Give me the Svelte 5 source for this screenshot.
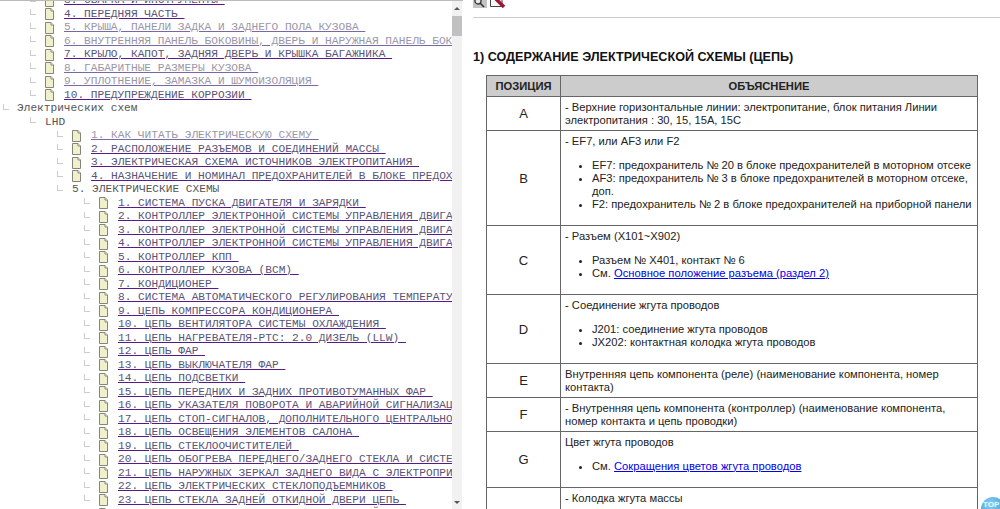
<script>
  const top = [
    ['3. СВАРКА И ИНСТРУМЕНТЫ', 'd'],
    ['4. ПЕРЕДНЯЯ ЧАСТЬ', 'd'],
    ['5. КРЫША, ПАНЕЛИ ЗАДКА И ЗАДНЕГО ПОЛА КУЗОВА', 'g'],
    ['6. ВНУТРЕННЯЯ ПАНЕЛЬ БОКОВИНЫ, ДВЕРЬ И НАРУЖНАЯ ПАНЕЛЬ БОКОВИНЫ', 'g'],
    ['7. КРЫЛО, КАПОТ, ЗАДНЯЯ ДВЕРЬ И КРЫШКА БАГАЖНИКА', 'd'],
    ['8. ГАБАРИТНЫЕ РАЗМЕРЫ КУЗОВА', 'g'],
    ['9. УПЛОТНЕНИЕ, ЗАМАЗКА И ШУМОИЗОЛЯЦИЯ', 'g'],
    ['10. ПРЕДУПРЕЖДЕНИЕ КОРРОЗИИ', 'd']
  ];
  const mid = [
    ['1. КАК ЧИТАТЬ ЭЛЕКТРИЧЕСКУЮ СХЕМУ', 'g'],
    ['2. РАСПОЛОЖЕНИЕ РАЗЪЕМОВ И СОЕДИНЕНИЙ МАССЫ', 'd'],
    ['3. ЭЛЕКТРИЧЕСКАЯ СХЕМА ИСТОЧНИКОВ ЭЛЕКТРОПИТАНИЯ', 'd'],
    ['4. НАЗНАЧЕНИЕ И НОМИНАЛ ПРЕДОХРАНИТЕЛЕЙ В БЛОКЕ ПРЕДОХРАНИТЕЛЕЙ', 'd']
  ];
  const leaf = [
    '1. СИСТЕМА ПУСКА ДВИГАТЕЛЯ И ЗАРЯДКИ',
    '2. КОНТРОЛЛЕР ЭЛЕКТРОННОЙ СИСТЕМЫ УПРАВЛЕНИЯ ДВИГАТЕЛЕМ',
    '3. КОНТРОЛЛЕР ЭЛЕКТРОННОЙ СИСТЕМЫ УПРАВЛЕНИЯ ДВИГАТЕЛЕМ',
    '4. КОНТРОЛЛЕР ЭЛЕКТРОННОЙ СИСТЕМЫ УПРАВЛЕНИЯ ДВИГАТЕЛЕМ',
    '5. КОНТРОЛЛЕР КПП',
    '6. КОНТРОЛЛЕР КУЗОВА (BCM)',
    '7. КОНДИЦИОНЕР',
    '8. СИСТЕМА АВТОМАТИЧЕСКОГО РЕГУЛИРОВАНИЯ ТЕМПЕРАТУРЫ',
    '9. ЦЕПЬ КОМПРЕССОРА КОНДИЦИОНЕРА',
    '10. ЦЕПЬ ВЕНТИЛЯТОРА СИСТЕМЫ ОХЛАЖДЕНИЯ',
    '11. ЦЕПЬ НАГРЕВАТЕЛЯ-PTC: 2.0 ДИЗЕЛЬ (LLW)',
    '12. ЦЕПЬ ФАР',
    '13. ЦЕПЬ ВЫКЛЮЧАТЕЛЯ ФАР',
    '14. ЦЕПЬ ПОДСВЕТКИ',
    '15. ЦЕПЬ ПЕРЕДНИХ И ЗАДНИХ ПРОТИВОТУМАННЫХ ФАР',
    '16. ЦЕПЬ УКАЗАТЕЛЯ ПОВОРОТА И АВАРИЙНОЙ СИГНАЛИЗАЦИИ',
    '17. ЦЕПЬ СТОП-СИГНАЛОВ, ДОПОЛНИТЕЛЬНОГО ЦЕНТРАЛЬНОГО',
    '18. ЦЕПЬ ОСВЕЩЕНИЯ ЭЛЕМЕНТОВ САЛОНА',
    '19. ЦЕПЬ СТЕКЛООЧИСТИТЕЛЕЙ',
    '20. ЦЕПЬ ОБОГРЕВА ПЕРЕДНЕГО/ЗАДНЕГО СТЕКЛА И СИСТЕМЫ',
    '21. ЦЕПЬ НАРУЖНЫХ ЗЕРКАЛ ЗАДНЕГО ВИДА С ЭЛЕКТРОПРИВОДОМ',
    '22. ЦЕПЬ ЭЛЕКТРИЧЕСКИХ СТЕКЛОПОДЪЕМНИКОВ',
    '23. ЦЕПЬ СТЕКЛА ЗАДНЕЙ ОТКИДНОЙ ДВЕРИ ЦЕПЬ',
    '24. ЦЕПЬ ЗВУКОВОГО СИГНАЛА, ПАРКОВОЧНЫЙ РАДАР СИСТЕМА'
  ];
</script>

{#snippet doc()}
  <svg class="doc" width="9" height="12" viewBox="0 0 9 12">
    <path d="M.5.5H6L8.5 3V11.5H.5Z" fill="#f0f1cc" stroke="#85857a"/>
    <path d="M6 .5V3H8.5" fill="#fff" stroke="#85857a"/>
  </svg>
{/snippet}

{#snippet link(level, item)}
  <div class="row lv{level}">
    <span class="elbow"></span>
    {@render doc()}
    <a class={item[1]} href="#x">{item[0]}&nbsp;</a>
  </div>
{/snippet}

<div class="page">
  <aside class="side">
    <div class="tree">
      <div class="list">
        {#each top as item}{@render link(1, item)}{/each}
        <div class="row lv0"><span class="elbow"></span><span class="plain">Электрических схем</span></div>
        <div class="row lv1"><span class="elbow"></span><span class="plain">LHD</span></div>
        {#each mid as item}{@render link(2, item)}{/each}
        <div class="row lv2"><span class="elbow"></span><span class="plain">5. ЭЛЕКТРИЧЕСКИЕ СХЕМЫ</span></div>
        {#each leaf as text}{@render link(3, [text, 'd'])}{/each}
      </div>
    </div>
    <div class="bar">
      <svg class="arrow" width="10" height="6" viewBox="0 0 10 6"><path d="M5 1L8 4H2Z" fill="#555"/></svg>
      <div class="track"><div class="thumb"></div></div>
      <svg class="arrow" width="10" height="6" viewBox="0 0 10 6"><path d="M5 5L2 2H8Z" fill="#555"/></svg>
    </div>
  </aside>

  <main class="content">
    <div class="tools">
      <svg width="14" height="8" viewBox="0 0 14 8"><rect width="14" height="8" fill="#c4c4c4"/><circle cx="5" cy="1" r="3" fill="#e8e8e8" stroke="#333" stroke-width="1.3"/><path d="M7 3L11 7" stroke="#333" stroke-width="1.6"/></svg>
      <svg width="18" height="8" viewBox="0 0 18 8"><path d="M1.5 -1V6.5H13V-1" fill="#f4f8fb" stroke="#444"/><path d="M7 -1L15 7" stroke="#a01830" stroke-width="3.5"/></svg>
    </div>
    <hr />
    <h1>1) СОДЕРЖАНИЕ ЭЛЕКТРИЧЕСКОЙ СХЕМЫ (ЦЕПЬ)</h1>
    <table>
      <thead>
        <tr><th class="pos">ПОЗИЦИЯ</th><th>ОБЪЯСНЕНИЕ</th></tr>
      </thead>
      <tbody>
        <tr><td class="pos">A</td><td>- Верхние горизонтальные линии: электропитание, блок питания Линии электропитания : 30, 15, 15A, 15C</td></tr>
        <tr>
          <td class="pos">B</td>
          <td>- EF7, или AF3 или F2
            <ul>
              <li>EF7: предохранитель № 20 в блоке предохранителей в моторном отсеке</li>
              <li>AF3: предохранитель № 3 в блоке предохранителей в моторном отсеке, доп.</li>
              <li>F2: предохранитель № 2 в блоке предохранителей на приборной панели</li>
            </ul>
          </td>
        </tr>
        <tr>
          <td class="pos">C</td>
          <td>- Разъем (X101~X902)
            <ul>
              <li>Разъем № X401, контакт № 6</li>
              <li>См. <a class="ref" href="#x">Основное положение разъема (раздел 2)</a></li>
            </ul>
          </td>
        </tr>
        <tr>
          <td class="pos">D</td>
          <td>- Соединение жгута проводов
            <ul>
              <li>J201: соединение жгута проводов</li>
              <li>JX202: контактная колодка жгута проводов</li>
            </ul>
          </td>
        </tr>
        <tr><td class="pos">E</td><td>Внутренняя цепь компонента (реле) (наименование компонента, номер контакта)</td></tr>
        <tr><td class="pos">F</td><td>- Внутренняя цепь компонента (контроллер) (наименование компонента, номер контакта и цепь проводки)</td></tr>
        <tr>
          <td class="pos">G</td>
          <td>Цвет жгута проводов
            <ul><li>См. <a class="ref" href="#x">Сокращения цветов жгута проводов</a></li></ul>
          </td>
        </tr>
        <tr><td class="pos"></td><td>- Колодка жгута массы
          <ul><li>&nbsp;</li></ul>
        </td></tr>
      </tbody>
    </table>
    <div class="totop">TOP</div>
  </main>
</div>

<style>
  :global(body) { margin: 0; background: #fff; }
  .page { display: flex; width: 1000px; height: 509px; overflow: hidden; position: relative; }
  .side { display: flex; width: 463px; height: 509px; flex: none; border-top: 1px solid #bbb; box-sizing: border-box; }
  .tree { width: 452px; flex: none; overflow: hidden; }
  .list { margin-top: -7px; }
  .row { display: flex; align-items: center; height: 13.5px; white-space: nowrap; font: 11.17px/13.5px "Liberation Mono", "Courier New", monospace; color: #555; }
  .lv0 { padding-left: 3px; } .lv1 { padding-left: 30px; } .lv2 { padding-left: 57px; } .lv3 { padding-left: 84px; }
  .elbow { flex: none; width: 5px; height: 5px; margin-right: 9px; margin-top: -4px; border-left: 1px solid #ccc; border-bottom: 1px solid #ccc; }
  .lv0 .elbow { margin-right: 8px; }
  .doc { flex: none; margin-right: 10px; }
  .plain { color: #555; }
  a.d { color: #5a5478; text-decoration: underline; text-decoration-color: #551a8b; }
  a.g { color: #9a97a8; text-decoration: underline; text-decoration-color: #7a68a6; }
  .bar { width: 10px; flex: none; background: #f1f1f1; display: flex; flex-direction: column; align-items: center; height: 508px; }
  .arrow { flex: none; margin: 5px 0 4px; }
  .track { flex: 1; width: 100%; }
  .thumb { height: 20px; background: #c1c1c1; }
  .content { flex: 1; padding: 0 0 0 10px; font: 11.2px/13px "Liberation Sans", Arial, sans-serif; color: #222; }
  .tools { display: flex; height: 8px; gap: 2px; }
  .tools svg { display: block; }
  hr { border: 0; border-top: 1px solid #ccc; margin: 9px 0 0; }
  h1 { font: bold 12.6px/16px "Liberation Sans", Arial, sans-serif; margin: 31px 0 10px; color: #111; }
  table { border-collapse: collapse; margin-left: 13px; width: 492px; table-layout: fixed; }
  th, td { border: 1px solid #666; padding: 3.5px 4px; vertical-align: middle; text-align: left; font-weight: normal; }
  th { background: #ccc; font-weight: bold; text-align: center; }
  .pos { width: 65px; text-align: center; font-size: 13px; }
  th.pos { font-size: 11.2px; }
  ul { margin: 11px 0; padding-left: 27px; }
  a.ref { color: #00e; }
  .totop { position: absolute; left: 981px; top: 497px; width: 24px; height: 24px; border-radius: 50%; background: radial-gradient(circle at 40% 30%, #8ccdf2, #2a8ccb); color: #dff; font: bold 8px/16px "Liberation Sans", sans-serif; padding-left: 2px; box-sizing: border-box; }
</style>
